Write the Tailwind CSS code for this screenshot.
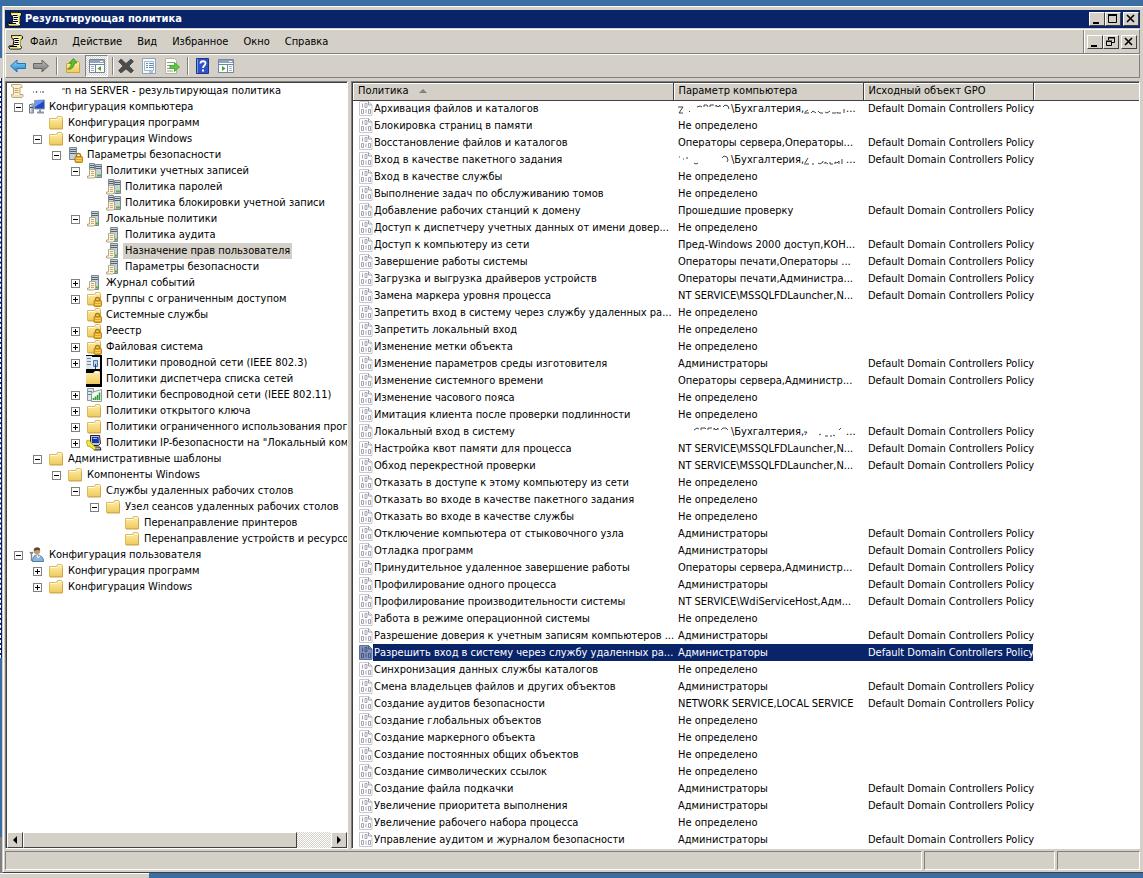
<!DOCTYPE html>
<html lang="ru">
<head>
  <meta charset="UTF-8">
  <meta name="viewport" content="width=device-width, initial-scale=1.0">
  <title>Результирующая политика</title>
  <script src="https://cdn.jsdelivr.net/npm/@tailwindcss/browser@4"></script>
</head>
<body class="min-h-screen bg-[#3a6ea5] font-['DejaVu_Sans_Condensed','DejaVu_Sans',sans-serif] text-[11px] leading-4 text-black flex flex-col overflow-hidden">

  <!-- Icons -->
  <svg class="absolute size-0" aria-hidden="true">
    <defs>
      <linearGradient id="gFolder" x1="0" y1="0" x2="0" y2="1"><stop offset="0" stop-color="#fdeeb0"/><stop offset="1" stop-color="#f0cb5c"/></linearGradient>
      <linearGradient id="gBlue" x1="0" y1="0" x2="0" y2="1"><stop offset="0" stop-color="#8fd6f8"/><stop offset="1" stop-color="#1c86d1"/></linearGradient>
      <linearGradient id="gGray" x1="0" y1="0" x2="0" y2="1"><stop offset="0" stop-color="#b8b8b8"/><stop offset="1" stop-color="#777"/></linearGradient>
      <symbol id="i-scroll" viewBox="0 0 16 16">
        <path d="M3.500 1.500h9l2 1v2l-2 1v6l1 2-1 1.500h-10l-1.500-1v-2h4l1-6-2-1.500z" fill="#fff" stroke="#000"/>
        <path d="M12 2.500v9M12.500 3h1.500M2 13.500h9.500M4 2.500h7" fill="none" stroke="#f4e64a" stroke-width="1.400"/>
        <path d="M5.500 4.500h5M7 6.500h4M6.500 8.500h4M6 10.500h5M2 12.500h7" stroke="#000"/>
      </symbol>
      <symbol id="i-scroll-pale" viewBox="0 0 16 16">
        <path d="M2.500 1.500h9l1.500 1v2h-2v7h3v2l-1 1h-9l-1.500-1v-2h2v-7l-2-1z" fill="#fbf3d8" stroke="#b9a878"/>
        <path d="M5.500 5.500h4M5.500 7.500h4M5.500 9.500h4" stroke="#c9a04c"/><path d="M3 13h10" fill="none" stroke="#e2cf95"/>
      </symbol>
      <symbol id="i-folder" viewBox="0 0 16 16">
        <path d="M1.500 3.500h7l1-2h4l1 1v11h-13z" fill="url(#gFolder)" stroke="#dfb95a"/>
        <path d="M10 2.500h3M2 4.500h7" stroke="#fffbe2"/><path d="M14.500 5v9H2" fill="none" stroke="#cfa44c"/>
      </symbol>
      <symbol id="i-lock" viewBox="0 0 16 16">
        <path d="M9.500 10V8.500a2 2 0 0 1 4 0V10" fill="none" stroke="#a97a1b" stroke-width="1.400"/>
        <rect x="8" y="9.500" width="7.500" height="6" rx="1" fill="#e9a91f" stroke="#a9730f" stroke-width=".8"/><path d="M9 11.500h5.500M9 13.500h5.500" stroke="#f9d873" stroke-width=".8"/>
      </symbol>
      <symbol id="i-server" viewBox="0 0 16 16">
        <path d="M2.500.5h7v12h-7z" fill="#c5d0da" stroke="#7a8894"/><path d="M3 2.500h6M3 4.500h6M3 6.500h6" stroke="#4f6475"/>
      </symbol>
      <symbol id="i-sheet" viewBox="0 0 16 16">
        <path d="M3.500 6.500h6v7l-1.500 1.500h-6.500v-2h2z" fill="#fbf4dd" stroke="#b0a27c" stroke-width=".9"/><path d="M5 8.500h3M5 10.500h3M5 12.500h3" stroke="#b5a373" stroke-width=".9"/>
      </symbol>
      <symbol id="i-server-lock" viewBox="0 0 16 16"><use href="#i-server"/><use href="#i-lock"/></symbol>
      <symbol id="i-server-sheet" viewBox="0 0 16 16">
        <path d="M5.500.5h7v14h-7z" fill="#c7d1d8" stroke="#7a8894"/><path d="M6 2.500h6M6 4.500h6" stroke="#4f6475"/><path d="M10 12.500h2" stroke="#44c01e" stroke-width="2"/><use href="#i-sheet"/>
      </symbol>
      <symbol id="i-servers" viewBox="0 0 16 16">
        <path d="M3.500.5h5v12h-5zM9.500 1.500h6v13h-6z" fill="#c7d1d8" stroke="#7a8894"/><path d="M4 2.500h4M4 4.500h4M10 3.500h5M10 5.500h5" stroke="#4f6475"/><path d="M11 12.500h4" stroke="#5cae3c" stroke-width="2"/><use href="#i-sheet"/>
      </symbol>
      <symbol id="i-folder-lock" viewBox="0 0 16 16"><use href="#i-folder"/><use href="#i-lock"/></symbol>
      <symbol id="i-folder-black" viewBox="0 0 16 16"><path d="M0 0h16v16H0z"/><path d="M0 2h7l2-2h4l1 1v12H0z" fill="url(#gFolder)"/><path d="M9 1.500h3" stroke="#fff"/></symbol>
      <symbol id="i-wired" viewBox="0 0 16 16">
        <path d="M0 0h16v16H0z"/><path d="M0 1h6v13H0z" fill="#dfe7ee"/><path d="M1 3.500h4M1 6.500h4M1 9.500h4" stroke="#7389a0"/>
        <path d="M5 2h9v12H5z" fill="#e9f1f7"/><path d="M7.500 5.500h4v6h-4z" fill="#b9d2ec" stroke="#4d79aa"/><path d="M9.500 14V9" stroke="#1d3f78"/>
      </symbol>
      <symbol id="i-wifi" viewBox="0 0 16 16">
        <path d="M1.500 1.500h6v12h-6z" fill="#dfe7ee" stroke="#8798a6"/><path d="M2 4.500h4M2 7.500h4" stroke="#6c8194"/>
        <path d="M5.500 5.500l10-3v12h-10z" fill="#f2f8f1" stroke="#8aa08c"/><path d="M7.500 13v-2M9.500 13V9.500M11.500 13V8M13.500 13V5.500" stroke="#2c9a3d" stroke-width="1.500"/>
      </symbol>
      <symbol id="i-ipsec" viewBox="0 0 16 16">
        <path d="M4.500.5h9l1 8-2 2h-6l-2-2z" fill="#c7c3ba" stroke="#222"/><path d="M6 2h6.500l.5 6H6z" fill="#1437b8"/><path d="M7 3.500h4" stroke="#9db8ff"/>
        <path d="M8 12h6l1 3H8z" fill="#bdb9b0" stroke="#222"/><path d="M.5 6l2-1 2.500 2.500L6 9l4 4-1.500 2L4 11.500 1.500 11z" fill="#f5ea3c" stroke="#a69a10" stroke-width=".8"/>
      </symbol>
      <symbol id="i-computer" viewBox="0 0 16 16">
        <path d="M5.500 1.500l10-.5v9h-10z" fill="#2146c8" stroke="#8d9dab"/><path d="M6 2h9L6 8z" fill="#6d93f2"/><path d="M8 13.500h7M11 10.500v3" stroke="#8a97a3" stroke-width="2"/>
        <path d="M.5 5.500h4v8.500h-4z" fill="#dbe2e8" stroke="#6b7985"/><path d="M3.500 4v9" stroke="#9aa9b5" stroke-width="2"/><path d="M1 8.500h3" stroke="#3d4c5a"/>
      </symbol>
      <symbol id="i-user" viewBox="0 0 16 16">
        <circle cx="8" cy="4" r="3.200" fill="#c9966b"/><path d="M4.800 4a3.200 3.200 0 0 1 6.400-.8L8 3z" fill="#5d4633"/>
        <path d="M3.500 14.500c0-5 2-6.500 5-6.500s6 2 6 6.500z" fill="#8db4dc" stroke="#547ca8"/><path d="M8 8l1 3 2-2.500" fill="none" stroke="#fff"/><path d="M2.500 5v9M1 5l1.500 2L4 5" fill="none" stroke="#7c8791" stroke-width="1.400"/>
      </symbol>
      <symbol id="i-policy" viewBox="0 0 14 16">
        <path d="M.5.5h9l3.500 3.500v10.500H.5z" fill="#fff" stroke="#c8c8d0"/><path d="M9.500.5v3.500H13" fill="none" stroke="#9c9ca8"/>
        <path d="M3.500 2.500v4M6 2.500h2v4H6zM2.500 8.500h2v4h-2zM7 8.500v4M9.500 8.500h2v4h-2z" fill="none" stroke="#a3a3b0"/>
      </symbol>
      <symbol id="i-policy-selected" viewBox="0 0 14 16">
        <path d="M.5.5h9l3.500 3.500v10.500H.5z" fill="#8592b4" stroke="#5f6f9c"/><path d="M9.500.5v3.500H13" fill="none" stroke="#46588c"/>
        <path d="M3.500 2.500v4M6 2.500h2v4H6zM2.500 8.500h2v4h-2zM7 8.500v4M9.500 8.500h2v4h-2z" fill="none" stroke="#41538a"/>
      </symbol>
      <symbol id="i-back" viewBox="0 0 16 16"><path d="M.5 8L7 2v3.500h8.500v5H7V14z" fill="url(#gBlue)" stroke="#2273b3"/></symbol>
      <symbol id="i-forward" viewBox="0 0 16 16"><path d="M15.500 8L9 2v3.500H.5v5H9V14z" fill="url(#gGray)" stroke="#666"/></symbol>
      <symbol id="i-up" viewBox="0 0 16 16">
        <path d="M1.500 5.500h6l1-2h5l1 1v10h-13z" fill="url(#gFolder)" stroke="#d0a33e"/><path d="M2.500 11C5 10 6 8 6.500 5H4l4.500-4.500L12 5H9.500c-.5 4-3 7-7 6z" fill="#5cc22f" stroke="#3a8d1a" stroke-width=".8"/>
      </symbol>
      <symbol id="i-console-left" viewBox="0 0 16 14">
        <path d="M.5.5h15v13H.5z" fill="#fff" stroke="#7388a0"/><path d="M1 1h14v3H1z" fill="#8ea4bd"/><path d="M11 2.500h3" stroke="#fff"/><path d="M1 5.500h14M6.500 5v8" stroke="#7388a0"/><path d="M2 7.500h3M2 9.500h3M2 11.500h3" stroke="#9fb0c2"/><path d="M12 7v5L8.500 9.500z" fill="#3fa52c"/>
      </symbol>
      <symbol id="i-console-right" viewBox="0 0 16 14">
        <path d="M.5.5h15v13H.5z" fill="#fff" stroke="#7388a0"/><path d="M1 1h14v3H1z" fill="#8ea4bd"/><path d="M11 2.500h3" stroke="#fff"/><path d="M1 5.500h14M9.500 5v8" stroke="#7388a0"/><path d="M11 7.500h3M11 9.500h3M11 11.500h3" stroke="#9fb0c2"/><path d="M4 7v5l3.500-2.500z" fill="#3fa52c"/>
      </symbol>
      <symbol id="i-delete" viewBox="0 0 16 16"><path d="M3 1l5 4.500L13 1l2.500 2.500L11 8l4.500 4.500L13 15l-5-4-5 4-2.500-2.500L5 8 .5 3.500z" fill="#4c4c4c" stroke="#333" stroke-width=".6"/></symbol>
      <symbol id="i-props" viewBox="0 0 16 16"><path d="M1.500.5h13v15h-13z" fill="#f7fafd" stroke="#8fa3ba"/><path d="M3.500 3.500h9v9h-9z" fill="none" stroke="#a5b6c9"/><path d="M5 5.500h2M8 5.500h4M5 7.500h2M8 7.500h4M5 9.500h2M8 9.500h4M8 14h4" stroke="#6f8bab"/></symbol>
      <symbol id="i-export" viewBox="0 0 16 16"><path d="M1.500.5h9l2 2v13h-11z" fill="#fffef2" stroke="#b7b29b"/><path d="M3 4.500h7M3 7.500h4M3 10.500h4M3 13h6" stroke="#8b98ab"/><path d="M6 7.500h4.500V4.500L15.500 9l-5 4.500v-3H6z" fill="#5cc93a" stroke="#3d9a22" stroke-width=".8"/></symbol>
      <symbol id="i-help" viewBox="0 0 14 16"><path d="M.5.500h12v15H.5z" fill="#2f52c4" stroke="#1c348c"/><path d="M1.500 1v14" stroke="#7d97ec"/><path d="M4.500 5.500c0-3 5-3 5 0 0 2-2.500 2-2.500 4.500" fill="none" stroke="#fff" stroke-width="1.800"/><path d="M6 11.500h2v2H6z" fill="#fff"/></symbol>
    </defs>
  </svg>

  <div class="h-1.5 shrink-0"></div>

  <div class="flex grow">
    <!-- Edge of the window behind -->
    <div class="flex w-0.5 shrink-0 flex-col">
      <div class="h-[52px] bg-[#3a6ea5]"></div>
      <div class="h-5 bg-[#d4d0c8]"></div>
      <div class="h-[580px] border-l border-dashed border-white bg-[#0a246a]"></div>
      <div class="grow bg-[#3a6ea5]"></div>
      <div class="h-9 bg-[#808080]"></div>
    </div>

    <div class="flex min-w-0 grow flex-col border-b border-l border-[#404040] border-l-[#d4d0c8] bg-[#d4d0c8]">
      <div class="flex grow flex-col border-l border-t border-white pt-[3px] pl-px pr-[3px]">

        <header class="flex h-[18px] items-center bg-[#0a246a] pl-0.5 pr-px text-white">
          <svg class="size-4"><use href="#i-scroll"/></svg>
          <h1 class="ml-0.5 grow font-bold">Результирующая политика</h1>
          <div class="flex">
            <button aria-label="Свернуть" class="flex h-3.5 w-4 border border-white border-r-[#404040] border-b-[#404040] bg-[#d4d0c8]"><svg class="h-3 w-3.5"><path d="M3 9h6v2H3z"/></svg></button>
            <button aria-label="Развернуть" class="flex h-3.5 w-4 border border-white border-r-[#404040] border-b-[#404040] bg-[#d4d0c8]"><svg class="h-3 w-3.5"><path d="M2.500 1.500h8v8h-8z" fill="none" stroke="#000"/><path d="M2 2h9" stroke="#000" stroke-width="2"/></svg></button>
            <button aria-label="Закрыть" class="ml-0.5 flex h-3.5 w-4 border border-white border-r-[#404040] border-b-[#404040] bg-[#d4d0c8]"><svg class="h-3 w-3.5"><path d="M3 2l7 7M10 2l-7 7" stroke="#000" stroke-width="1.600"/></svg></button>
          </div>
        </header>

        <div class="mt-px flex h-[25px] border border-[#808080] border-t-white border-l-white">
          <nav class="flex grow items-center border-r border-[#808080] pl-0.5">
            <svg class="mr-1.5 size-4"><use href="#i-scroll"/></svg>
            <a href="#" class="mr-[15px]">Файл</a>
            <a href="#" class="mr-[15px]">Действие</a>
            <a href="#" class="mr-[15px]">Вид</a>
            <a href="#" class="mr-[15px]">Избранное</a>
            <a href="#" class="mr-[15px]">Окно</a>
            <a href="#">Справка</a>
          </nav>
          <div class="flex items-center border-l border-white px-0.5">
            <button aria-label="Свернуть окно" class="flex h-3.5 w-4 border border-white border-r-[#404040] border-b-[#404040]"><svg class="h-3 w-3.5"><path d="M3 9h6v2H3z"/></svg></button>
            <button aria-label="Восстановить окно" class="flex h-3.5 w-4 border border-white border-r-[#404040] border-b-[#404040]"><svg class="h-3 w-3.5"><path d="M4.500 4V1.500h6v5H8M2.500 5.500h5v4h-5zM4 2h7M2 5h6" fill="none" stroke="#000"/></svg></button>
            <button aria-label="Закрыть окно" class="ml-0.5 flex h-3.5 w-4 border border-white border-r-[#404040] border-b-[#404040]"><svg class="h-3 w-3.5"><path d="M3 2l7 7M10 2l-7 7" stroke="#000" stroke-width="1.600"/></svg></button>
          </div>
        </div>

        <div class="flex h-6 items-center border border-[#808080] border-t-white border-l-white pl-1">
          <button aria-label="Назад"><svg class="size-4"><use href="#i-back"/></svg></button>
          <button aria-label="Вперед" class="ml-[7px]"><svg class="size-4"><use href="#i-forward"/></svg></button>
          <div class="mx-[7px] h-[18px] w-0.5 border-l border-r border-l-[#808080] border-r-white"></div>
          <button aria-label="Вверх"><svg class="size-4"><use href="#i-up"/></svg></button>
          <button aria-label="Дерево консоли" class="ml-1 flex h-[22px] w-[23px] items-center justify-center border border-[#808080] border-r-white border-b-white bg-[repeating-conic-gradient(#fff_0_25%,#d4d0c8_0_50%)] bg-[length:2px_2px]"><svg class="h-3.5 w-4"><use href="#i-console-left"/></svg></button>
          <div class="mx-1 h-[18px] w-0.5 border-l border-r border-l-[#808080] border-r-white"></div>
          <button aria-label="Удалить"><svg class="size-4"><use href="#i-delete"/></svg></button>
          <button aria-label="Свойства" class="ml-[7px]"><svg class="size-4"><use href="#i-props"/></svg></button>
          <button aria-label="Экспорт списка" class="ml-[7px]"><svg class="size-4"><use href="#i-export"/></svg></button>
          <div class="mx-[7px] h-[18px] w-0.5 border-l border-r border-l-[#808080] border-r-white"></div>
          <button aria-label="Справка"><svg class="h-4 w-3.5"><use href="#i-help"/></svg></button>
          <button aria-label="Панель действий" class="ml-2"><svg class="h-3.5 w-4"><use href="#i-console-right"/></svg></button>
        </div>

        <main class="mt-[3px] flex grow">
          <!-- Console tree -->
          <section class="flex w-[343px] shrink-0 flex-col border border-[#808080] border-r-white border-b-white bg-white">
            <div class="flex grow flex-col overflow-hidden border-l border-t border-[#404040]">
              <ul id="tree" class="grow overflow-hidden whitespace-nowrap"></ul>
              <div class="flex h-4 bg-[repeating-conic-gradient(#fff_0_25%,#d4d0c8_0_50%)] bg-[length:2px_2px]">
                <button aria-label="Прокрутить влево" class="flex w-4 items-center justify-center border border-white border-r-[#404040] border-b-[#404040] bg-[#d4d0c8]"><svg class="h-2 w-1"><path d="M4 0v8L0 4z"/></svg></button>
                <div class="w-[274px] border border-white border-r-[#404040] border-b-[#404040] bg-[#d4d0c8]"></div>
                <div class="grow"></div>
                <button aria-label="Прокрутить вправо" class="flex w-4 items-center justify-center border border-white border-r-[#404040] border-b-[#404040] bg-[#d4d0c8]"><svg class="h-2 w-1"><path d="M0 0v8l4-4z"/></svg></button>
              </div>
            </div>
          </section>

          <!-- Policy list -->
          <section class="ml-[3px] min-w-0 grow border border-[#808080] border-r-white border-b-white bg-white">
            <div class="h-full border-l border-t border-[#404040]">
              <table class="w-full table-fixed border-collapse whitespace-nowrap text-left">
                <colgroup><col class="w-5"><col class="w-[300px]"><col class="w-[190px]"><col class="w-[170px]"><col></colgroup>
                <thead>
                  <tr class="h-[17px] bg-[#d4d0c8]">
                    <th colspan="2" class="border-r border-b border-[#404040] p-0 pl-[5px] font-normal leading-4 shadow-[inset_1px_1px_0_#fff]"><span class="flex items-center">Политика<svg class="ml-2.5 h-1 w-2"><path d="M4 0l4 4H0z" fill="#808080"/></svg></span></th>
                    <th class="border-r border-b border-[#404040] p-0 pl-[5px] font-normal leading-4 shadow-[inset_1px_1px_0_#fff]">Параметр компьютера</th>
                    <th class="border-r border-b border-[#404040] p-0 pl-[5px] font-normal leading-4 shadow-[inset_1px_1px_0_#fff]">Исходный объект GPO</th>
                    <th class="border-b border-[#404040] p-0 shadow-[inset_1px_1px_0_#fff]"></th>
                  </tr>
                </thead>
                <tbody id="policies"></tbody>
              </table>
            </div>
          </section>
        </main>

        <footer class="mt-0.5 mb-0.5 flex h-[19px] gap-0.5">
          <div class="grow border border-[#808080] border-r-white border-b-white"></div>
          <div class="w-[131px] border border-[#808080] border-r-white border-b-white"></div>
          <div class="w-[83px] border border-[#808080] border-r-white border-b-white"></div>
        </footer>
      </div>
    </div>
  </div>

  <div class="h-[5px] w-[149px] shrink-0 border-t border-white bg-[#d4d0c8]"></div>

  <script>
    // level, expander, icon, label
    const tree = [
      [1, '-', 'computer', 'Конфигурация компьютера'],
      [2, '', 'folder', 'Конфигурация программ'],
      [2, '-', 'folder', 'Конфигурация Windows'],
      [3, '-', 'server-lock', 'Параметры безопасности'],
      [4, '-', 'servers', 'Политики учетных записей'],
      [5, '', 'servers', 'Политика паролей'],
      [5, '', 'servers', 'Политика блокировки учетной записи'],
      [4, '-', 'server-sheet', 'Локальные политики'],
      [5, '', 'server-sheet', 'Политика аудита'],
      [5, '', 'server-sheet', 'Назначение прав пользователя', true],
      [5, '', 'server-sheet', 'Параметры безопасности'],
      [4, '+', 'server-sheet', 'Журнал событий'],
      [4, '+', 'folder-lock', 'Группы с ограниченным доступом'],
      [4, '', 'folder-lock', 'Системные службы'],
      [4, '+', 'folder-lock', 'Реестр'],
      [4, '+', 'folder-lock', 'Файловая система'],
      [4, '+', 'wired', 'Политики проводной сети (IEEE 802.3)'],
      [4, '', 'folder-black', 'Политики диспетчера списка сетей'],
      [4, '+', 'wifi', 'Политики беспроводной сети (IEEE 802.11)'],
      [4, '+', 'folder', 'Политики открытого ключа'],
      [4, '+', 'folder', 'Политики ограниченного использования программ'],
      [4, '+', 'ipsec', 'Политики IP-безопасности на "Локальный компьютер"'],
      [2, '-', 'folder', 'Административные шаблоны'],
      [3, '-', 'folder', 'Компоненты Windows'],
      [4, '-', 'folder', 'Службы удаленных рабочих столов'],
      [5, '-', 'folder', 'Узел сеансов удаленных рабочих столов'],
      [6, '', 'folder', 'Перенаправление принтеров'],
      [6, '', 'folder', 'Перенаправление устройств и ресурсов'],
      [1, '-', 'user', 'Конфигурация пользователя'],
      [2, '+', 'folder', 'Конфигурация программ'],
      [2, '+', 'folder', 'Конфигурация Windows'],
    ];

    const none = 'Не определено';
    const admins = 'Администраторы';
    const gpo = 'Default Domain Controllers Policy';
    const sql = 'NT SERVICE\\MSSQLFDLauncher,N...';

    // Remains of wiped account names
    const scraps = {
      a: ['M0 3h5l-4 6h4M11 7l1 1M19 3l3-1 2 1M26 3V1h3l1 2M32 3V1h4M38 3V1l2 2 2-2v2M45 3l2-2 3 1 1 3', 'M0 9h5M1 8l3-2M7 9l2-2 3 2M14 7l2 2h3M21 8l2 1 3-2M28 9h4M33 8v1h4M40 9V5M43 7v2'],
      b: ['M1 2h1M5 4h1M8 3h2M16 8l2 1 2-1M44 3l2-2 3 1 1 3-1 2', 'M0 9h5M1 8l3-5M8 9h2M14 8l2 1 3-2V6M21 9V7l3 2M26 7v2h3M31 9V7l2 1 2-2v3M38 4v5'],
      c: ['M16 3l3-2 2 1M23 3V1h4l1 1M30 3V1h4M36 3V1l2 2 2-2v2M43 3l2-2h3l2 2', 'M0 5h3L1 8M15 8l2-1M21 9h3M26 9h2M29 8l2 1M35 3l2-2'],
    };
    const wiped = k => `<span class="flex items-center"><svg class="h-2.5 w-[53px]" fill="none" stroke="#444"><path d="${scraps[k][0]}"/></svg>\\Бухгалтерия,<svg class="h-2.5 w-[42px]" fill="none" stroke="#444"><path d="${scraps[k][1]}"/></svg>...</span>`;

    const policies = [
      ['Архивация файлов и каталогов', wiped('a'), gpo],
      ['Блокировка страниц в памяти', none],
      ['Восстановление файлов и каталогов', 'Операторы сервера,Операторы...', gpo],
      ['Вход в качестве пакетного задания', wiped('b'), gpo],
      ['Вход в качестве службы', none],
      ['Выполнение задач по обслуживанию томов', none],
      ['Добавление рабочих станций к домену', 'Прошедшие проверку', gpo],
      ['Доступ к диспетчеру учетных данных от имени довер...', none],
      ['Доступ к компьютеру из сети', 'Пред-Windows 2000 доступ,КОН...', gpo],
      ['Завершение работы системы', 'Операторы печати,Операторы ...', gpo],
      ['Загрузка и выгрузка драйверов устройств', 'Операторы печати,Администра...', gpo],
      ['Замена маркера уровня процесса', sql, gpo],
      ['Запретить вход в систему через службу удаленных ра...', none],
      ['Запретить локальный вход', none],
      ['Изменение метки объекта', none],
      ['Изменение параметров среды изготовителя', admins, gpo],
      ['Изменение системного времени', 'Операторы сервера,Администр...', gpo],
      ['Изменение часового пояса', none],
      ['Имитация клиента после проверки подлинности', none],
      ['Локальный вход в систему', wiped('c'), gpo],
      ['Настройка квот памяти для процесса', sql, gpo],
      ['Обход перекрестной проверки', sql, gpo],
      ['Отказать в доступе к этому компьютеру из сети', none],
      ['Отказать во входе в качестве пакетного задания', none],
      ['Отказать во входе в качестве службы', none],
      ['Отключение компьютера от стыковочного узла', admins, gpo],
      ['Отладка программ', admins, gpo],
      ['Принудительное удаленное завершение работы', 'Операторы сервера,Администр...', gpo],
      ['Профилирование одного процесса', admins, gpo],
      ['Профилирование производительности системы', 'NT SERVICE\\WdiServiceHost,Адм...', gpo],
      ['Работа в режиме операционной системы', none],
      ['Разрешение доверия к учетным записям компьютеров ...', admins, gpo],
      ['Разрешить вход в систему через службу удаленных ра...', admins, gpo, true],
      ['Синхронизация данных службы каталогов', none],
      ['Смена владельцев файлов и других объектов', admins, gpo],
      ['Создание аудитов безопасности', 'NETWORK SERVICE,LOCAL SERVICE', gpo],
      ['Создание глобальных объектов', none],
      ['Создание маркерного объекта', none],
      ['Создание постоянных общих объектов', none],
      ['Создание символических ссылок', none],
      ['Создание файла подкачки', admins, gpo],
      ['Увеличение приоритета выполнения', admins, gpo],
      ['Увеличение рабочего набора процесса', none],
      ['Управление аудитом и журналом безопасности', admins, gpo],
    ];

    const expander = s => s
      ? `<button aria-label="${s === '-' ? 'Свернуть' : 'Развернуть'}" class="mr-[11px] size-[9px] shrink-0 border border-[#808080]"><svg class="size-[7px]"><path d="${s === '-' ? 'M1 3.5h5' : 'M1 3.5h5M3.5 1v5'}" stroke="#000"/></svg></button>`
      : '<span class="w-5 shrink-0"></span>';

    document.getElementById('tree').innerHTML =
      `<li class="flex h-4 items-center pl-0.5"><svg class="size-4 shrink-0"><use href="#i-scroll-pale"/></svg><svg class="ml-2 h-2 w-8 shrink-0" fill="none" stroke="#444"><path d="M0 5h1M3 6l1-2M7 5h1M10 6V4M29 2h3"/></svg><span>n на SERVER - результирующая политика</span></li>` +
      tree.map(([level, box, icon, label, active]) => `
      <li class="flex h-4 items-center" style="padding-left:${7 + (level - 1) * 19}px">
        ${expander(box)}
        <svg class="-ml-[5px] size-4 shrink-0"><use href="#i-${icon}"/></svg>
        <a href="#" class="ml-0.5 px-0.5 ${active ? 'bg-[#d4d0c8]' : ''}">${label}</a>
      </li>`).join('');

    document.getElementById('policies').innerHTML = policies.map(([name, value, source = '', active]) => `
      <tr class="h-[17px]">
        <td class="p-0 pl-1.5"><svg class="h-4 w-3.5"><use href="#i-policy${active ? '-selected' : ''}"/></svg></td>
        <td class="p-0 pl-px ${active ? 'bg-[#0a246a] text-white' : ''}">${name}</td>
        <td class="p-0 pl-[5px] ${active ? 'bg-[#0a246a] text-white' : ''}">${value}</td>
        <td class="p-0 pl-[5px] ${active ? 'bg-[#0a246a] text-white' : ''}">${source}</td>
        <td class="p-0"></td>
      </tr>`).join('');
  </script>
</body>
</html>
